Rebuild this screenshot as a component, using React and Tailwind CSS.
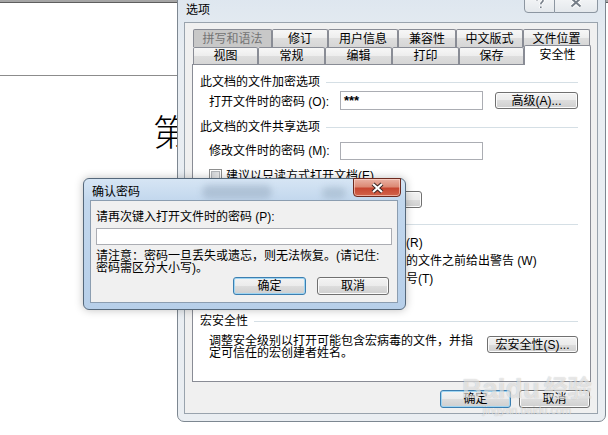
import React from "react";

const font = "font-['Liberation_Sans','Noto_Sans_CJK_SC',sans-serif]";

function Btn({ children, className = "", focused = false }) {
  return (
    <div
      className={`flex shrink-0 items-center justify-center rounded-[3px] border bg-[linear-gradient(#f3f3f3_0%,#ebebeb_50%,#dddddd_50%,#cfcfcf_100%)] text-[12px] leading-none whitespace-nowrap text-black ${
        focused
          ? "border-[#3c7fb1] shadow-[inset_0_0_0_1px_#9fd5f2]"
          : "border-[#707070] shadow-[inset_0_0_0_1px_#fbfbfb]"
      } ${className}`}
    >
      {children}
    </div>
  );
}

function Check() {
  return (
    <div className="flex h-[13px] w-[13px] shrink-0 items-center justify-center border border-[#8e8f8f] bg-white">
      <div className="h-[9px] w-[9px] border border-[#b2b5b9] bg-[linear-gradient(135deg,#cfd2d6,#f7f7f7)]" />
    </div>
  );
}

function Group({ title }) {
  return (
    <div className="flex h-[14px] items-center pl-[7px] pr-[12px]">
      <span className="whitespace-nowrap">{title}</span>
      <div className="ml-[6px] h-px flex-1 bg-[#d5dfe5]" />
    </div>
  );
}

function Tab({ label, className = "", dim = false }) {
  return (
    <div
      className={`flex shrink-0 items-center justify-center rounded-t-[2px] border border-b-0 border-[#898c95] ${
        dim
          ? "bg-[#c8c8c8] text-[#747474]"
          : "bg-[linear-gradient(#f7f7f7_0%,#ededed_50%,#dedede_50%,#d6d6d6_100%)] text-black"
      } ${className}`}
    >
      {label}
    </div>
  );
}

function CheckRow({ label, className = "" }) {
  return (
    <div className={`flex h-[13px] items-center gap-[4px] pl-[16px] whitespace-nowrap ${className}`}>
      <Check />
      <span>{label}</span>
    </div>
  );
}

function OptionsWindow() {
  return (
    <div className="absolute left-[177px] top-[-8px] flex h-[430px] w-[429px] flex-col rounded-[7px] border border-[#7d8791] bg-[linear-gradient(#dde6ef,#e8edf2_60px,#eaeef2)]">
      <div className="h-[29px] pl-[8px] pt-[10px]">选项</div>

      {/* caption buttons */}
      <div className="absolute right-[7px] top-[-1px] flex h-[21px]">
        <div className="flex w-[31px] items-center justify-center rounded-bl-[4px] border border-[#8c96a1] bg-[linear-gradient(#f8f9fa,#e4e8ec)]">
          <svg width="10" height="12" viewBox="0 0 10 12">
            <path
              d="M2 3.5C2 1.8 3.3 1 5 1s3 .9 3 2.4c0 1.6-2.2 1.9-2.2 3.8M5.8 9.5v1.5"
              fill="none"
              stroke="#ffffff"
              strokeWidth="3.4"
            />
            <path
              d="M2 3.5C2 1.8 3.3 1 5 1s3 .9 3 2.4c0 1.6-2.2 1.9-2.2 3.8M5.8 9.5v1.5"
              fill="none"
              stroke="#767e88"
              strokeWidth="1.6"
            />
          </svg>
        </div>
        <div className="flex w-[43px] items-center justify-center rounded-br-[4px] border border-l-0 border-[#8c96a1] bg-[linear-gradient(#f8f9fa,#e4e8ec)]">
          <svg width="14" height="11" viewBox="0 0 14 11">
            <path d="M2.5 1.5L11.5 9.5M11.5 1.5L2.5 9.5" stroke="#ffffff" strokeWidth="4" />
            <path d="M2.5 1.5L11.5 9.5M11.5 1.5L2.5 9.5" stroke="#767e88" strokeWidth="2" />
          </svg>
        </div>
      </div>

      <div className="ml-[6px] mr-[7px] h-[392px] border border-[#99a3ad] bg-[#f0f0f0] pl-[7px] pt-[6px]">
        <div className="flex h-[18px] pl-[1px]">
          <Tab label="拼写和语法" dim className="h-[18px] w-[79px]" />
          <Tab label="修订" className="h-[18px] w-[56px]" />
          <Tab label="用户信息" className="h-[18px] w-[70px]" />
          <Tab label="兼容性" className="h-[18px] w-[58px]" />
          <Tab label="中文版式" className="h-[18px] w-[67px]" />
          <Tab label="文件位置" className="h-[18px] w-[67px]" />
        </div>
        <div className="relative z-10 flex h-[17px] items-end pl-[1px]">
          <Tab label="视图" className="h-[17px] w-[65px]" />
          <Tab label="常规" className="h-[17px] w-[67px]" />
          <Tab label="编辑" className="h-[17px] w-[67px]" />
          <Tab label="打印" className="h-[17px] w-[67px]" />
          <Tab label="保存" className="h-[17px] w-[65px]" />
          <div className="mb-[-1px] flex h-[20px] w-[67px] shrink-0 items-center justify-center rounded-t-[2px] border border-b-0 border-[#898c95] bg-white pb-[1px]">
            安全性
          </div>
        </div>

        <div className="h-[318px] w-[399px] border border-[#898c95] bg-white">
          <div className="mt-[10px]">
            <Group title="此文档的文件加密选项" />
          </div>
          <div className="mt-[2px] flex h-[19px] items-center pl-[16px]">
            <span className="w-[131px] shrink-0 pt-[3px] whitespace-nowrap">打开文件时的密码 (O):</span>
            <div className="flex h-[19px] w-[143px] shrink-0 items-center border border-[#abadb3] bg-white pl-[3px] text-[13px] font-bold leading-none">
              ***
            </div>
            <Btn className="ml-[12px] h-[17px] w-[83px]">高级(A)...</Btn>
          </div>

          <div className="mt-[10px]">
            <Group title="此文档的文件共享选项" />
          </div>
          <div className="mt-[8px] flex h-[18px] items-center pl-[16px]">
            <span className="w-[131px] shrink-0 whitespace-nowrap">修改文件时的密码 (M):</span>
            <div className="h-[18px] w-[143px] shrink-0 border border-[#abadb3] bg-white" />
          </div>
          <CheckRow label="建议以只读方式打开文档(E)" className="mt-[9px]" />
          <div className="mt-[9px] flex h-[17px] gap-[12px] pl-[16px]">
            <Btn className="h-[17px] w-[96px]">数字签名(D)...</Btn>
            <Btn className="h-[17px] w-[105px]">保护文档(P)...</Btn>
          </div>

          <div className="mt-[9px]">
            <Group title="隐私选项" />
          </div>
          <CheckRow label="保存时从文件属性中删除个人信息(R)" className="mt-[5px]" />
          <CheckRow label="打印、保存或发送包含修订或批注的文件之前给出警告 (W)" className="mt-[5px]" />
          <CheckRow label="存储用于增强合并精确性的随机编号(T)" className="mt-[5px]" />
          <CheckRow label="打开或保存时标记可见(V)" className="mt-[5px]" />

          <div className="mt-[11px]">
            <Group title="宏安全性" />
          </div>
          <div className="mt-[7px] flex items-start pl-[16px]">
            <p className="w-[264px] shrink-0 leading-[12px]">
              调整安全级别以打开可能包含宏病毒的文件，并指定可信任的宏创建者姓名。
            </p>
            <Btn className="ml-[14px] mt-[1px] h-[17px] w-[91px]">宏安全性(S)...</Btn>
          </div>
        </div>

        <div className="mt-[8px] flex h-[18px] justify-end gap-[8px] pr-[7px]">
          <Btn focused className="h-[18px] w-[71px]">确定</Btn>
          <Btn className="h-[18px] w-[71px]">取消</Btn>
        </div>
      </div>
    </div>
  );
}

function ConfirmWindow() {
  return (
    <div className="absolute left-[83px] top-[178px] flex h-[132px] w-[323px] flex-col rounded-[6px] border border-[#55687b] bg-[linear-gradient(#d6e5f4,#c2d7ed_22px,#b7cfe9)] shadow-[0_0_8px_rgba(0,0,0,0.25)]">
      <div className="relative h-[21px] overflow-hidden pl-[8px] pt-[6px]">
        <div className="absolute left-[118px] top-[6px] h-[14px] w-[70px] rounded-full bg-[#8da2b7]/45 blur-[3px]" />
        <div className="absolute left-[238px] top-[8px] h-[12px] w-[24px] rounded-full bg-[#8da2b7]/40 blur-[3px]" />
        <span className="relative">确认密码</span>
      </div>

      <div className="absolute right-[4px] top-[-1px] flex h-[19px] w-[48px] items-center justify-center rounded-b-[4px] border border-[#6d2a1f] bg-[linear-gradient(#eab2a4_0%,#dc8a75_45%,#c74731_55%,#d2644b_100%)] shadow-[inset_0_0_0_1px_rgba(255,220,210,0.6)]">
        <svg width="15" height="12" viewBox="0 0 15 12">
          <path d="M3 2L12 10M12 2L3 10" stroke="#3d2622" strokeWidth="4.2" />
          <path d="M3 2L12 10M12 2L3 10" stroke="#ffffff" strokeWidth="2.2" />
        </svg>
      </div>

      <div className="ml-[6px] mr-[7px] h-[103px] border border-[#8b9db0] bg-[#f0f0f0] px-[5px]">
        <div className="pt-[9px] whitespace-nowrap">请再次键入打开文件时的密码 (P):</div>
        <div className="mt-[4px] h-[17px] border border-[#abadb3] bg-white" />
        <p className="mt-[5px] leading-[12px] whitespace-nowrap">
          请注意：密码一旦丢失或遗忘，则无法恢复。(请记住:
          <br />
          密码需区分大小写)。
        </p>
        <div className="mt-[3px] flex justify-end gap-[11px] pr-[3px]">
          <Btn focused className="h-[18px] w-[73px]">确定</Btn>
          <Btn className="h-[18px] w-[72px]">取消</Btn>
        </div>
      </div>
    </div>
  );
}

function Watermark() {
  return (
    <div className="pointer-events-none absolute left-[462px] top-[374px] flex flex-col items-center text-white/60 [text-shadow:0_0_1px_rgba(0,0,0,0.25)]">
      <div className="flex items-end text-[28px] font-bold leading-[30px]">
        <span>Bai</span>
        <span>du</span>
        <span className="ml-[4px] text-[24px]">经验</span>
      </div>
      <div className="text-[11px] leading-[13px]">jingyan.baidu.com</div>
    </div>
  );
}

export default function App() {
  return (
    <div className={`relative h-[435px] w-[608px] overflow-hidden bg-white text-[12px] leading-[14px] text-black ${font}`}>
      <div className="h-[3px] border-b border-[#5e5e5e] bg-[#a5a5a5]" />
      <div className="mt-[72px] w-[178px] border-t border-[#8c8c8c]" />
      <div className="pl-[153px] pt-[36px] font-['Noto_Sans_CJK_SC',serif] text-[36px] font-light leading-[36px]">
        第
      </div>
      <OptionsWindow />
      <ConfirmWindow />
      <Watermark />
    </div>
  );
}
